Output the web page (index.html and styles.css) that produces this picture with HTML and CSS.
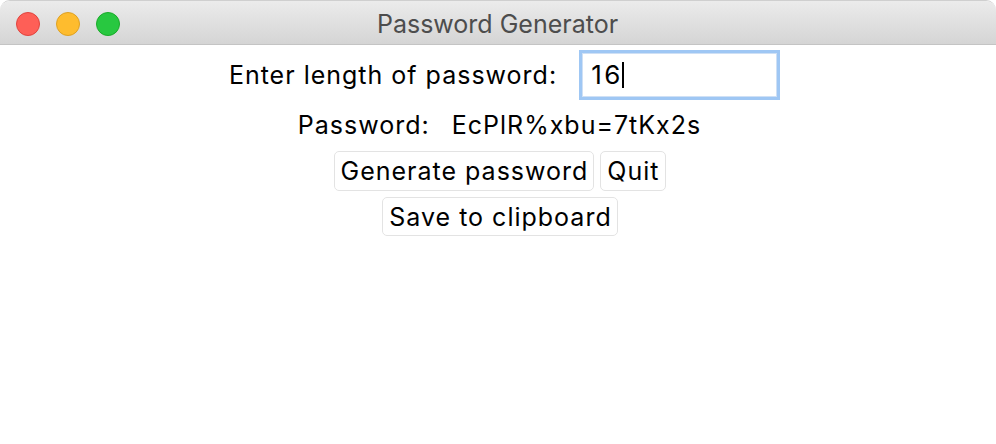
FILE: index.html
```html
<!DOCTYPE html>
<html>
<head>
<meta charset="utf-8">
<link rel="stylesheet" href="styles.css">
</head>
<body>
<div class="window">
  <div class="titlebar">
    <div class="lights">
      <span class="light red"></span>
      <span class="light yellow"></span>
      <span class="light green"></span>
    </div>
    <div class="title">Password Generator</div>
  </div>
  <div class="content">
    <div class="row row-length">
      <span class="label">Enter length of password:</span>
      <div class="input"><span class="value">16</span><span class="caret"></span></div>
    </div>
    <div class="row row-pass">
      <span class="label">Password:</span>
      <span class="pass">EcPlR%xbu=7tKx2s</span>
    </div>
    <div class="row row-btns">
      <button class="btn btn-gen">Generate password</button>
      <button class="btn btn-quit">Quit</button>
    </div>
    <div class="row row-save">
      <button class="btn btn-save">Save to clipboard</button>
    </div>
  </div>
</div>
</body>
</html>
```
FILE: styles.css
```css
* { box-sizing: border-box; }
html, body {
  margin: 0;
  padding: 0;
  width: 996px;
  height: 444px;
  overflow: hidden;
  background: #ffffff;
  font-family: Inter, "Liberation Sans", sans-serif;
}
.window {
  width: 996px;
  height: 444px;
  background: #fff;
  border-radius: 10px 10px 0 0;
  border-top: 1px solid #cfcfcf;
  overflow: hidden;
  display: flex;
  flex-direction: column;
}
.titlebar {
  height: 44px;
  flex: none;
  background: linear-gradient(#ebebeb, #d5d5d5);
  border-bottom: 1px solid #c4c4c4;
  position: relative;
  display: flex;
  align-items: center;
  justify-content: center;
  padding-top: 3px;
}
.lights {
  position: absolute;
  left: 16px;
  top: 11px;
  display: flex;
  gap: 16px;
}
.light {
  width: 24px;
  height: 24px;
  border-radius: 50%;
  display: block;
}
.red { background: #fe5f57; border: 1px solid #e0443e; }
.yellow { background: #febc2e; border: 1px solid #dea123; }
.green { background: #28c840; border: 1px solid #1aab29; }
.title {
  font-size: 25px;
  color: #4d4d4d;
  margin-left: -1px;
}
.content {
  display: flex;
  flex-direction: column;
  align-items: center;
  color: #000;
  font-size: 25px;
  letter-spacing: 1px;
}
.row {
  display: flex;
  align-items: center;
  line-height: 30px;
}
.row-length {
  margin-top: 5px;
  margin-left: 13px;
  gap: 22px;
}
.input {
  width: 201px;
  height: 50px;
  border: 3px solid #9fc7f4;
  box-shadow: inset 0 0 0 1px #cfe0f5;
  display: flex;
  align-items: center;
  padding-left: 9px;
  padding-bottom: 1px;
}
.value {
  font-size: 26px;
  letter-spacing: 2.5px;
}
.caret {
  width: 2px;
  height: 26px;
  background: #000;
  margin-left: -1px;
}
.row-pass {
  margin-top: 10px;
  margin-left: 3px;
  gap: 22px;
}
.row-btns {
  margin-top: 11px;
  margin-left: 3px;
  gap: 6px;
}
.btn {
  font-family: inherit;
  font-size: 25px;
  letter-spacing: 1px;
  color: #000;
  background: #fff;
  border: 1px solid #e3e3e3;
  border-radius: 5px;
  height: 40px;
  padding: 0 5px 0 6px;
  margin: 0;
  line-height: 38px;
}
.row-save {
  margin-top: 6px;
  margin-left: 4px;
}
.row-save .btn {
  height: 39px;
}
```
